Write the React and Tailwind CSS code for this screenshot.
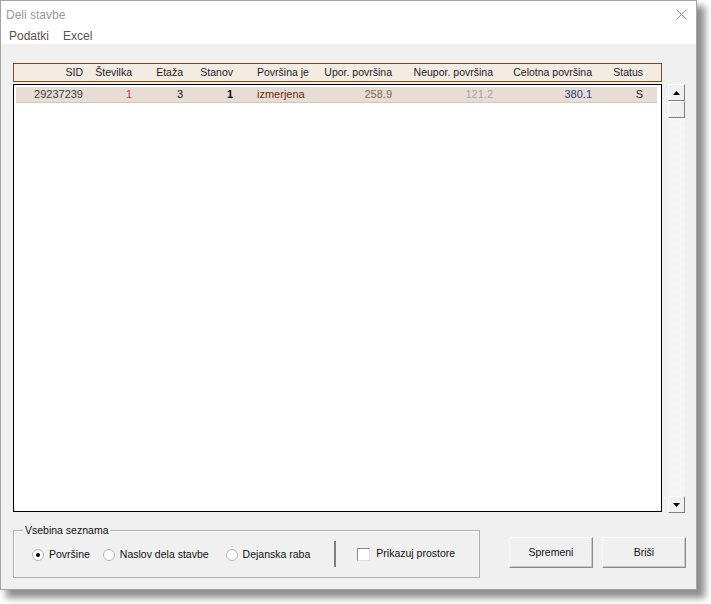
const columns = [
    { label: 'SID', hw: 'w-[72px]', rw: 'w-[70px]', value: '29237239', tone: 'text-[#3c3c3c]' },
    { label: 'Številka', hw: 'w-[49px]', rw: 'w-[49px]', value: '1', tone: 'text-[#b8451a]' },
    { label: 'Etaža', hw: 'w-[51px]', rw: 'w-[51px]', value: '3', tone: 'text-[#111111]' },
    { label: 'Stanov', hw: 'w-[50px]', rw: 'w-[50px]', value: '1', tone: 'text-black font-bold' },
    { label: 'Površina je', hw: 'w-[84px]', rw: 'w-[84px]', value: 'izmerjena', tone: 'text-[#6b2b0b]', left: true },
    { label: 'Upor. površina', hw: 'w-[75px]', rw: 'w-[75px]', value: '258.9', tone: 'text-[#7d6b4f]' },
    { label: 'Neupor. površina', hw: 'w-[101px]', rw: 'w-[101px]', value: '121.2', tone: 'text-[#a6a6a6]' },
    { label: 'Celotna površina', hw: 'w-[99px]', rw: 'w-[99px]', value: '380.1', tone: 'text-[#2b3a7a]' },
    { label: 'Status', hw: 'w-[51px]', rw: 'w-[51px]', value: 'S', tone: 'text-[#222222]' },
];

const Radio = ({ checked, label, className = '' }) => (
    <div className={`flex items-center ${className}`}>
        <span className="w-[12px] h-[12px] rounded-full border border-[#b5b5b5] bg-white flex items-center justify-center">
            {checked && <span className="w-[4px] h-[4px] rounded-full bg-black" />}
        </span>
        <span className="ml-[5px] text-[10.5px] text-[#111]">{label}</span>
    </div>
);

const ScrollButton = ({ down = false }) => (
    <div className="h-[17px] w-[17px] bg-[#f0f0f0] border-t border-l border-t-white border-l-white border-b border-r border-b-[#7d7d7d] border-r-[#7d7d7d] flex items-center justify-center">
        <svg width="7" height="4" viewBox="0 0 7 4">
            {down ? <polygon points="0,0 7,0 3.5,4" fill="#000" /> : <polygon points="0,4 7,4 3.5,0" fill="#000" />}
        </svg>
    </div>
);

const Button = ({ children, className = '' }) => (
    <button
        type="button"
        className={`w-[84px] h-[31px] bg-[#f0f0f0] border border-t-white border-l-white border-b-[#8a8a8a] border-r-[#8a8a8a] shadow-[inset_-1px_-1px_0_#c8c8c8] text-[10.5px] text-[#111] ${className}`}
    >
        {children}
    </button>
);

const App = () => {
    return (
        <div className="w-[711px] h-[604px] bg-white font-['Liberation_Sans',Arial,sans-serif]">
            <div className="w-[697px] h-[590px] border border-[#a3a3a3] bg-[#f0f0f0] flex flex-col shadow-[7px_7px_7px_1px_rgba(0,0,0,0.45)]">
                {/* title bar */}
                <div className="h-[27px] bg-white flex items-center justify-between pl-[5px] pr-[9px]">
                    <span className="text-[12px] text-[#9a9a9a]">Deli stavbe</span>
                    <svg width="11" height="11" viewBox="0 0 11 11" className="mt-[-1px]">
                        <path d="M0.5 0.5 L10.5 10.5 M10.5 0.5 L0.5 10.5" stroke="#8a8a8a" strokeWidth="1" fill="none" />
                    </svg>
                </div>
                {/* menu */}
                <div className="h-[16px] bg-white flex items-center pl-[8px] text-[12px] text-[#5e524c]">
                    <span>Podatki</span>
                    <span className="ml-[14px]">Excel</span>
                </div>

                <div className="flex-1 pl-[12px] pt-[19px]">
                    <div className="flex">
                        <div className="w-[649px] flex flex-col">
                            <div className="h-[19px] border border-[#7a4a1e] bg-[#f3ece2] flex items-center text-[10.5px] text-[#1b1b2b]">
                                {columns.map((col) => (
                                    <div
                                        key={col.label}
                                        className={`${col.hw} shrink-0 whitespace-nowrap ${col.left ? 'pl-[21px]' : 'text-right pr-[3px]'}`}
                                    >
                                        {col.label}
                                    </div>
                                ))}
                            </div>
                            <div className="mt-[2px] h-[428px] border border-black bg-white p-[2px]">
                                <div className="w-[641px] h-[16px] bg-[#e7ddd4] border-b border-[#d2c6bb] flex items-center text-[11px]">
                                    {columns.map((col) => (
                                        <div
                                            key={col.label}
                                            className={`${col.rw} shrink-0 whitespace-nowrap ${col.tone} ${col.left ? 'pl-[21px]' : 'text-right pr-[3px]'}`}
                                        >
                                            {col.value}
                                        </div>
                                    ))}
                                </div>
                            </div>
                        </div>
                        <div className="ml-[6px] mt-[21px] w-[17px] h-[429px] flex flex-col bg-[repeating-conic-gradient(#efefef_0%_25%,#ffffff_0%_50%)] bg-[length:2px_2px]">
                            <ScrollButton />
                            <div className="h-[17px] w-[17px] bg-[#f0f0f0] border-t border-l border-t-white border-l-white border-b border-r border-b-[#7d7d7d] border-r-[#7d7d7d]" />
                            <div className="flex-1" />
                            <ScrollButton down />
                        </div>
                    </div>

                    <div className="flex mt-[17px]">
                        <div className="relative w-[467px] h-[48px] border border-[#b0b0b0] shadow-[inset_1px_1px_0_#ffffff] flex items-center">
                            <span className="absolute left-[9px] top-[-8px] px-[2px] bg-[#f0f0f0] text-[10.5px] text-[#111]">Vsebina seznama</span>
                            <Radio checked label="Površine" className="ml-[18px] mt-[1px]" />
                            <Radio label="Naslov dela stavbe" className="ml-[13px] mt-[1px]" />
                            <Radio label="Dejanska raba" className="ml-[17px] mt-[1px]" />
                            <div className="ml-[24px] w-[2px] h-[26px] bg-[#7f7f7f]" />
                            <div className="ml-[21px] flex items-center">
                                <span className="w-[13px] h-[13px] border border-t-[#8a8a8a] border-l-[#8a8a8a] border-b-[#e0e0e0] border-r-[#e0e0e0] bg-white" />
                                <span className="ml-[6px] text-[10.5px] text-[#111]">Prikazuj prostore</span>
                            </div>
                        </div>
                        <div className="ml-[29px] mt-[7px] flex gap-[9px]">
                            <Button>Spremeni</Button>
                            <Button>Briši</Button>
                        </div>
                    </div>
                </div>
            </div>
        </div>
    );
};

export default App;
